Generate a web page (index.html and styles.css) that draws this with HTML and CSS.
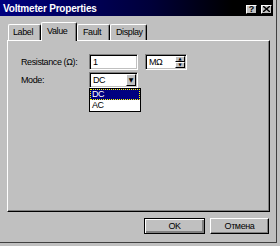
FILE: index.html
```html
<!DOCTYPE html>
<html lang="en">
<head>
  <meta charset="UTF-8">
  <title>Voltmeter Properties</title>
  <link rel="stylesheet" href="styles.css">
</head>
<body>
  <div class="window">
    <div class="titlebar">
      <span class="title">Voltmeter Properties</span>
      <div class="caption-btns">
        <span class="cap-btn">?</span>
        <span class="cap-btn">
          <svg width="7" height="6" viewBox="0 0 7 6"><path d="M0 0L7 6M7 0L0 6" stroke="#000" stroke-width="1.4"/></svg>
        </span>
      </div>
    </div>

    <div class="content">
      <div class="tabs">
        <div class="tab tab-label">Label</div>
        <div class="tab tab-value active">Value</div>
        <div class="tab tab-fault">Fault</div>
        <div class="tab tab-display">Display</div>
      </div>

      <div class="panel">
        <div class="form">
          <span class="label">Resistance (Ω):</span>
          <div class="row">
            <div class="field field-value">1</div>
            <div class="field field-unit">
              <span>MΩ</span>
              <div class="spinner">
                <span class="spin-btn">▲</span>
                <span class="spin-btn">▼</span>
              </div>
            </div>
          </div>

          <span class="label">Mode:</span>
          <div class="combo">
            <span class="combo-text">DC</span>
            <span class="combo-btn">▼</span>
            <div class="combo-list">
              <div class="combo-item selected">DC</div>
              <div class="combo-item">AC</div>
            </div>
          </div>
        </div>
      </div>

      <div class="buttons">
        <button class="btn btn-default">OK</button>
        <button class="btn">Отмена</button>
      </div>
    </div>
  </div>
</body>
</html>
```

FILE: styles.css
```css
body {
  margin: 0;
  background: #c0c0c0;
  font-family: "Liberation Sans", sans-serif;
  font-size: 9px;
  letter-spacing: -0.4px;
  color: #000;
}

.window {
  width: 277px;
  height: 243px;
  box-sizing: border-box;
  padding-right: 3px;
  border-right: 1px solid #404040;
  border-bottom: 1px solid #404040;
}

.titlebar {
  height: 16px;
  display: flex;
  align-items: center;
  justify-content: space-between;
  padding: 0 1px 0 3px;
  background: linear-gradient(to right, #000080, #00003a 55%, #000 85%);
}

.title {
  color: #fff;
  font-weight: bold;
  font-size: 10px;
  letter-spacing: -0.2px;
}

.caption-btns {
  display: flex;
  gap: 4px;
  padding-top: 2px;
}

.cap-btn {
  width: 11px;
  height: 9px;
  box-sizing: border-box;
  background: #c0c0c0;
  border-top: 1px solid #fff;
  border-left: 1px solid #fff;
  border-right: 1px solid #000;
  border-bottom: 1px solid #000;
  display: flex;
  align-items: center;
  justify-content: center;
  font-size: 9px;
  font-weight: bold;
  letter-spacing: 0;
  line-height: 1;
}

.content {
  padding: 6px 0 0 7px;
}

.tabs {
  display: flex;
  align-items: flex-end;
  height: 18px;
  margin-left: 1px;
}

.tab {
  height: 16px;
  box-sizing: border-box;
  border-top: 1px solid #fff;
  border-left: 1px solid #fff;
  border-right: 1px solid #000;
  border-radius: 2px 2px 0 0;
  box-shadow: inset -1px 0 #808080;
  padding: 2px 0 0 5px;
  white-space: nowrap;
  overflow: hidden;
}

.tab-label { width: 33px; padding-left: 4px; }
.tab-value { width: 36px; }
.tab-fault { width: 33px; }
.tab-display { width: 37px; }

.tab.active {
  height: 19px;
  margin-bottom: -1px;
  padding-top: 3px;
  background: #c0c0c0;
  position: relative;
  z-index: 1;
}

.panel {
  width: 263px;
  height: 172px;
  box-sizing: border-box;
  border-top: 1px solid #fff;
  border-left: 1px solid #fff;
  border-right: 1px solid #000;
  border-bottom: 1px solid #000;
  box-shadow: inset -1px -1px #808080;
  padding: 13px 0 0 13px;
}

.form {
  display: grid;
  grid-template-columns: 68px auto;
  row-gap: 2px;
  align-items: center;
}

.label {
  white-space: nowrap;
}

.row {
  display: flex;
  gap: 7px;
}

.field,
.combo {
  height: 16px;
  box-sizing: border-box;
  background: #fff;
  border-top: 1px solid #808080;
  border-left: 1px solid #808080;
  border-right: 1px solid #fff;
  border-bottom: 1px solid #fff;
  box-shadow: inset 1px 1px #000, inset -1px -1px #c0c0c0;
  display: flex;
  align-items: center;
  padding-left: 3px;
}

.field-value { width: 49px; }

.field-unit {
  width: 42px;
  justify-content: space-between;
  padding-right: 1px;
}

.spinner {
  display: flex;
  flex-direction: column;
}

.spin-btn,
.combo-btn {
  background: #c0c0c0;
  box-sizing: border-box;
  border-top: 1px solid #fff;
  border-left: 1px solid #fff;
  border-right: 1px solid #000;
  border-bottom: 1px solid #000;
  display: flex;
  align-items: center;
  justify-content: center;
  font-family: "DejaVu Sans", sans-serif;
  letter-spacing: 0;
  line-height: 1;
}

.spin-btn {
  width: 10px;
  height: 6px;
  font-size: 4px;
}

.combo {
  width: 49px;
  justify-content: space-between;
  padding-right: 1px;
  position: relative;
}

.combo-btn {
  width: 10px;
  height: 12px;
  font-size: 6px;
}

.combo-list {
  position: absolute;
  top: 15px;
  left: -1px;
  width: 52px;
  box-sizing: border-box;
  background: #fff;
  border: 1px solid #000;
}

.combo-item {
  height: 11px;
  box-sizing: border-box;
  padding-left: 2px;
  line-height: 10px;
}

.combo-item.selected {
  background: #000080;
  color: #fff;
  border: 1px dotted #ffff00;
  line-height: 9px;
  padding-left: 1px;
}

.buttons {
  display: flex;
  justify-content: flex-end;
  gap: 5px;
  width: 262px;
  margin-top: 6px;
}

.btn {
  height: 16px;
  width: 59px;
  box-sizing: border-box;
  padding: 0;
  background: #c0c0c0;
  font: inherit;
  letter-spacing: inherit;
  color: #000;
  border-top: 1px solid #fff;
  border-left: 1px solid #fff;
  border-right: 1px solid #000;
  border-bottom: 1px solid #000;
  box-shadow: inset -1px -1px #808080;
}

.btn-default {
  width: 61px;
  border: 1px solid #000;
  box-shadow: inset 1px 1px #fff, inset -2px -2px #808080;
}
```
